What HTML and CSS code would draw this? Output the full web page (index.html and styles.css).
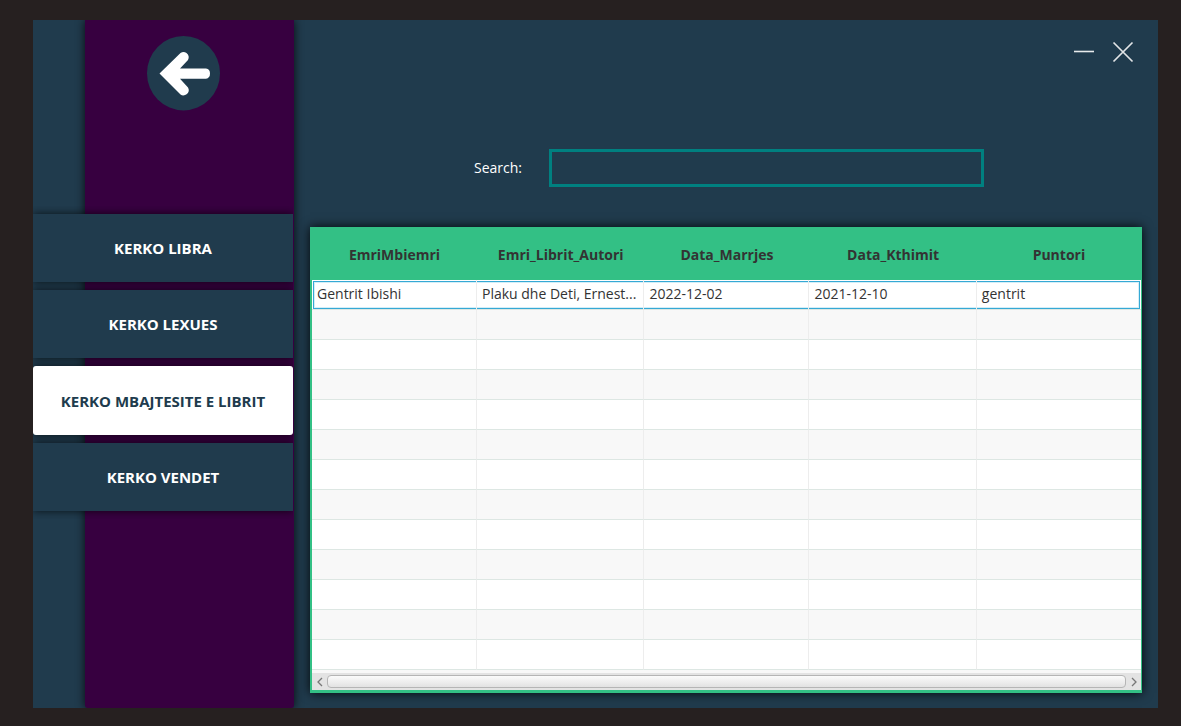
FILE: index.html
```html
<!DOCTYPE html>
<html lang="sq">
<head>
<meta charset="utf-8">
<title>Kerko mbajtesite e librit</title>
<link rel="stylesheet" href="styles.css">
</head>
<body>
<div class="window">
  <aside class="sidebar">
    <div class="panel">
      <button class="back" type="button" aria-label="Back">
        <svg viewBox="0 0 73 75" width="73" height="75" aria-hidden="true">
          <ellipse cx="36.500" cy="37.200" rx="36.500" ry="37.200" fill="#203b4d"/>
          <path d="M12.500 37.500 L33.500 17 Q36.500 15 39.500 17 Q43 20 41 24 L33 32.500 H59 Q63 33 63 37.500 Q63 42 59 42.800 H33 L41 51.500 Q43 55 40 58 Q36.500 60.500 33.500 58.500 Z" fill="#fff"/>
        </svg>
      </button>
    </div>
    <nav class="menu">
      <button class="item" type="button">KERKO LIBRA</button>
      <button class="item" type="button">KERKO LEXUES</button>
      <button class="item active" type="button" aria-current="page">KERKO MBAJTESITE E LIBRIT</button>
      <button class="item" type="button">KERKO VENDET</button>
    </nav>
  </aside>
  <main class="main">
    <header class="controls">
      <button class="control" type="button" aria-label="Minimize">
        <svg viewBox="0 0 22 22" width="22" height="22" aria-hidden="true"><path d="M1 10.500H21" stroke="#e8ebec" stroke-width="1.600"/></svg>
      </button>
      <button class="control" type="button" aria-label="Close">
        <svg viewBox="0 0 22 22" width="22" height="22" aria-hidden="true"><path d="M1.500 1.500L20.500 20.500M20.500 1.500L1.500 20.500" stroke="#e2e5e7" stroke-width="1.700"/></svg>
      </button>
    </header>
    <form class="search">
      <label for="search">Search:</label>
      <input id="search" type="text">
    </form>
    <section class="card">
      <table class="grid">
        <colgroup><col class="narrow"><col class="wide"><col class="narrow"><col class="wide"><col></colgroup>
        <thead>
          <tr><th>EmriMbiemri</th><th>Emri_Librit_Autori</th><th>Data_Marrjes</th><th>Data_Kthimit</th><th>Puntori</th></tr>
        </thead>
        <tbody>
          <tr class="focused"><td>Gentrit Ibishi</td><td>Plaku dhe Deti, Ernest...</td><td>2022-12-02</td><td>2021-12-10</td><td>gentrit</td></tr>
          <tr><td></td><td></td><td></td><td></td><td></td></tr>
          <tr><td></td><td></td><td></td><td></td><td></td></tr>
          <tr><td></td><td></td><td></td><td></td><td></td></tr>
          <tr><td></td><td></td><td></td><td></td><td></td></tr>
          <tr><td></td><td></td><td></td><td></td><td></td></tr>
          <tr><td></td><td></td><td></td><td></td><td></td></tr>
          <tr><td></td><td></td><td></td><td></td><td></td></tr>
          <tr><td></td><td></td><td></td><td></td><td></td></tr>
          <tr><td></td><td></td><td></td><td></td><td></td></tr>
          <tr><td></td><td></td><td></td><td></td><td></td></tr>
          <tr><td></td><td></td><td></td><td></td><td></td></tr>
          <tr><td></td><td></td><td></td><td></td><td></td></tr>
        </tbody>
      </table>
      <div class="scrollbar">
        <button class="step" type="button" aria-label="Scroll left"><svg viewBox="0 0 6 10" width="6" height="10" aria-hidden="true"><path d="M5 1L1 5L5 9" fill="none" stroke="#777" stroke-width="1.300"/></svg></button>
        <div class="thumb"></div>
        <button class="step" type="button" aria-label="Scroll right"><svg viewBox="0 0 6 10" width="6" height="10" aria-hidden="true"><path d="M1 1L5 5L1 9" fill="none" stroke="#777" stroke-width="1.300"/></svg></button>
      </div>
    </section>
  </main>
</div>
</body>
</html>
```
FILE: styles.css
```css
* { box-sizing: border-box; }

body {
  margin: 0;
  padding: 20px 23px 18px 33px;
  min-height: 100vh;
  display: flex;
  background: #262020;
  font-family: "Open Sans", "Noto Sans", sans-serif;
  font-size: 14px;
  line-height: 20px;
}

button {
  padding: 0;
  border: 0;
  background: none;
  font: inherit;
  cursor: pointer;
}

svg { display: block; }

.window {
  flex: 1;
  display: grid;
  grid-template-columns: 261px 1fr;
  background: #203b4d;
  overflow: hidden;
}

.sidebar {
  display: grid;
  grid-template-columns: 52px 1fr;
}

.panel {
  grid-area: 1 / 2;
  display: flex;
  justify-content: center;
  align-items: flex-start;
  padding: 16px 13px 0 0;
  background: #370040;
  border-radius: 0 0 3px 3px;
  box-shadow: 0 0 10px rgba(0, 0, 0, 0.8);
}

.back { border-radius: 50%; }

.menu {
  grid-area: 1 / 1 / 2 / 3;
  align-self: start;
  display: flex;
  flex-direction: column;
  gap: 8px;
  margin-top: 194px;
  margin-right: 1px;
}

.item {
  height: 68px;
  background: #203b4d;
  color: #fff;
  font-size: 15px;
  font-weight: 700;
  box-shadow: 0 0 8px rgba(0, 0, 0, 0.7);
  clip-path: inset(-8px 0 -8px 0);
}

.item.active {
  height: 69px;
  border-radius: 3px;
  background: #fff;
  color: #203b4d;
}

.main {
  display: flex;
  flex-direction: column;
  padding: 21px 16px 15px;
}

.controls {
  display: flex;
  justify-content: flex-end;
  gap: 17px;
  padding-right: 8px;
}

.search {
  display: flex;
  justify-content: center;
  align-items: center;
  gap: 27px;
  margin: 86px 0 40px;
  padding-left: 6px;
  color: #fff;
}

.search input {
  width: 435px;
  height: 38px;
  padding: 0 8px;
  border: 3px solid #008080;
  background: #203b4d;
  color: #fff;
  font: inherit;
}

.card {
  flex: 1;
  display: flex;
  flex-direction: column;
  padding: 0 1px 3px 2px;
  background: #33c085;
  box-shadow: 0 0 10px rgba(0, 0, 0, 0.9);
}

.grid {
  width: 100%;
  table-layout: fixed;
  border-collapse: separate;
  border-spacing: 0;
  background: #fff;
}

.narrow { width: 19.9%; }
.wide { width: 20.2%; }

.grid th {
  height: 53px;
  padding: 2px 0 0;
  background: #33c085;
  color: #333;
  font-weight: 700;
  text-align: center;
}

.grid td {
  height: 30px;
  padding: 0 5px 2px;
  border-right: 1px solid #ededed;
  border-bottom: 1px solid #dde7e3;
  color: #333;
  line-height: 20px;
  white-space: nowrap;
  overflow: hidden;
}

.grid td:last-child { border-right: 0; }

.grid tbody tr:nth-child(even) { background: #f8f8f8; }

.grid .focused {
  box-shadow: inset 0 0 0 1px #fff, inset 0 0 0 2px #35a9d5, inset 0 0 0 3px #d5eef7;
}

.scrollbar {
  display: flex;
  align-items: center;
  height: 20px;
  border-top: 3px solid #f8f8f8;
  background: #e3e3e3;
}

.step {
  display: flex;
  justify-content: center;
  align-items: center;
  width: 15px;
  height: 15px;
}

.thumb {
  flex: 1;
  height: 13px;
  border: 1px solid #b5b5b5;
  border-radius: 4px;
  background: linear-gradient(#fbfbfb, #e2e2e2);
}
```
